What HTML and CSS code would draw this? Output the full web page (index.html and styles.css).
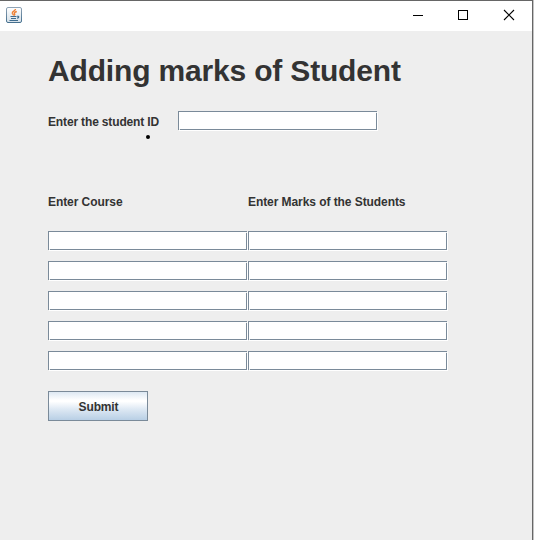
FILE: index.html
```html
<!DOCTYPE html>
<html lang="en">
<head>
<meta charset="utf-8">
<title>Adding marks of Student</title>
<link rel="stylesheet" href="styles.css">
</head>
<body>
<div class="window">
  <header class="titlebar">
    <svg class="app-icon" width="16" height="16" viewBox="0 0 16 16">
      <defs><linearGradient id="g" x1="0" y1="0" x2="0" y2="1"><stop offset="0" stop-color="#8fa3b5"/><stop offset="1" stop-color="#456f8e"/></linearGradient>
      <linearGradient id="f" x1="0" y1="0" x2="0" y2="1"><stop offset="0" stop-color="#ffffff"/><stop offset="1" stop-color="#d5e0e8"/></linearGradient></defs>
      <rect x=".5" y=".5" width="15" height="15" rx="1.5" fill="url(#f)" stroke="url(#g)"/>
      <path d="M9.500 2C9.500 4 6 4.400 6.300 6.200C6.500 7.200 7.500 7.500 7.700 8.500M10.800 4.500C8.500 5.200 8 6 8.600 6.900C9 7.500 8.700 8 8.200 8.500" fill="none" stroke="#ee8135" stroke-width="1.400"/>
      <path d="M4.500 9.500H10.500M5 11.500H10M3.500 13.500H12M11 9.300C13.500 8.700 13.300 10.800 11 11.300" fill="none" stroke="#3f6c8e" stroke-width="1.100"/>
    </svg>
    <div class="controls">
      <svg width="46" height="30" viewBox="0 0 46 30" shape-rendering="crispEdges"><path d="M18 14.500H28" stroke="#000"/></svg>
      <svg width="46" height="30" viewBox="0 0 46 30" shape-rendering="crispEdges"><path d="M17.500 9.500H26.500V18.500H17.500Z" fill="none" stroke="#000"/></svg>
      <svg width="46" height="30" viewBox="0 0 46 30"><path d="M17 9L27 19M27 9L17 19" stroke="#000" stroke-width="1.100"/></svg>
    </div>
  </header>
  <main class="content">
    <h1 class="heading">Adding marks of Student</h1>
    <div class="id-row">
      <label class="label id-label" for="student-id">Enter the student ID</label>
      <input class="field" id="student-id">
      <svg class="dot" width="4" height="4" viewBox="0 0 4 4"><circle cx="2" cy="2" r="2"/></svg>
    </div>
    <div class="marks">
      <span class="label">Enter Course</span><span class="label">Enter Marks of the Students</span>
    </div>
    <div class="grid">
      <input class="field"><input class="field">
      <input class="field"><input class="field">
      <input class="field"><input class="field">
      <input class="field"><input class="field">
      <input class="field"><input class="field">
    </div>
    <button class="submit">Submit</button>
  </main>
</div>
</body>
</html>
```
FILE: styles.css
```css
* { box-sizing: border-box; }
body {
  margin: 0;
  background: #c4c4c4;
  font: bold 12px "Liberation Sans", Arial, sans-serif;
  color: #333;
}
.window {
  width: 533px;
  height: 540px;
  background: #eee;
  border-top: 1px solid #666;
  border-right: 1px solid #666;
  overflow: hidden;
}
.titlebar {
  height: 30px;
  background: #fff;
  display: flex;
  justify-content: space-between;
  padding-left: 6px;
}
.app-icon { margin-top: 6px; }
.controls { display: flex; margin-right: -1px; }
.controls svg { display: block; }
.content { padding: 20px 0 0 48px; }
.heading {
  margin: 0;
  font-size: 30px;
  line-height: 40px;
  letter-spacing: -0.17px;
  white-space: nowrap;
}
.id-row {
  position: relative;
  display: flex;
  height: 20px;
  margin-top: 20px;
}
.label {
  height: 20px;
  line-height: 22px;
  letter-spacing: -0.07px;
  white-space: nowrap;
}
.id-label { width: 130px; letter-spacing: -0.15px; }
.dot { position: absolute; left: 98px; top: 24px; }
.field {
  display: block;
  width: 200px;
  height: 20px;
  margin: 0;
  padding: 0 3px;
  border: 0;
  border-radius: 0;
  outline: 0;
  font: 12px "Liberation Sans", Arial, sans-serif;
  background:
    linear-gradient(#eee, #eee) 0 19px / 1px 1px no-repeat,
    linear-gradient(#eee, #eee) 1px 18px / 1px 1px no-repeat,
    linear-gradient(#eee, #eee) 199px 0 / 1px 1px no-repeat,
    linear-gradient(#eee, #eee) 198px 1px / 1px 1px no-repeat,
    linear-gradient(#7a8a99, #7a8a99) 0 0 / 199px 1px no-repeat,
    linear-gradient(#7a8a99, #7a8a99) 0 18px / 199px 1px no-repeat,
    linear-gradient(#7a8a99, #7a8a99) 0 0 / 1px 19px no-repeat,
    linear-gradient(#7a8a99, #7a8a99) 198px 0 / 1px 19px no-repeat,
    #fff;
}
.marks {
  display: grid;
  grid-template-columns: 200px 200px;
  margin-top: 60px;
}
.grid {
  display: grid;
  grid-template-columns: 200px 200px;
  row-gap: 10px;
  margin-top: 20px;
}
.submit {
  display: block;
  width: 100px;
  height: 30px;
  margin-top: 20px;
  padding: 2px 0 0 1px;
  border: 1px solid #7a8a99;
  border-radius: 0;
  background: linear-gradient(#dde8f3 0%, #fff 30%, #fff 34%, #dde8f3 62%, #b8cfe5 100%);
  font: inherit;
  letter-spacing: -0.15px;
  color: #333;
}
```
